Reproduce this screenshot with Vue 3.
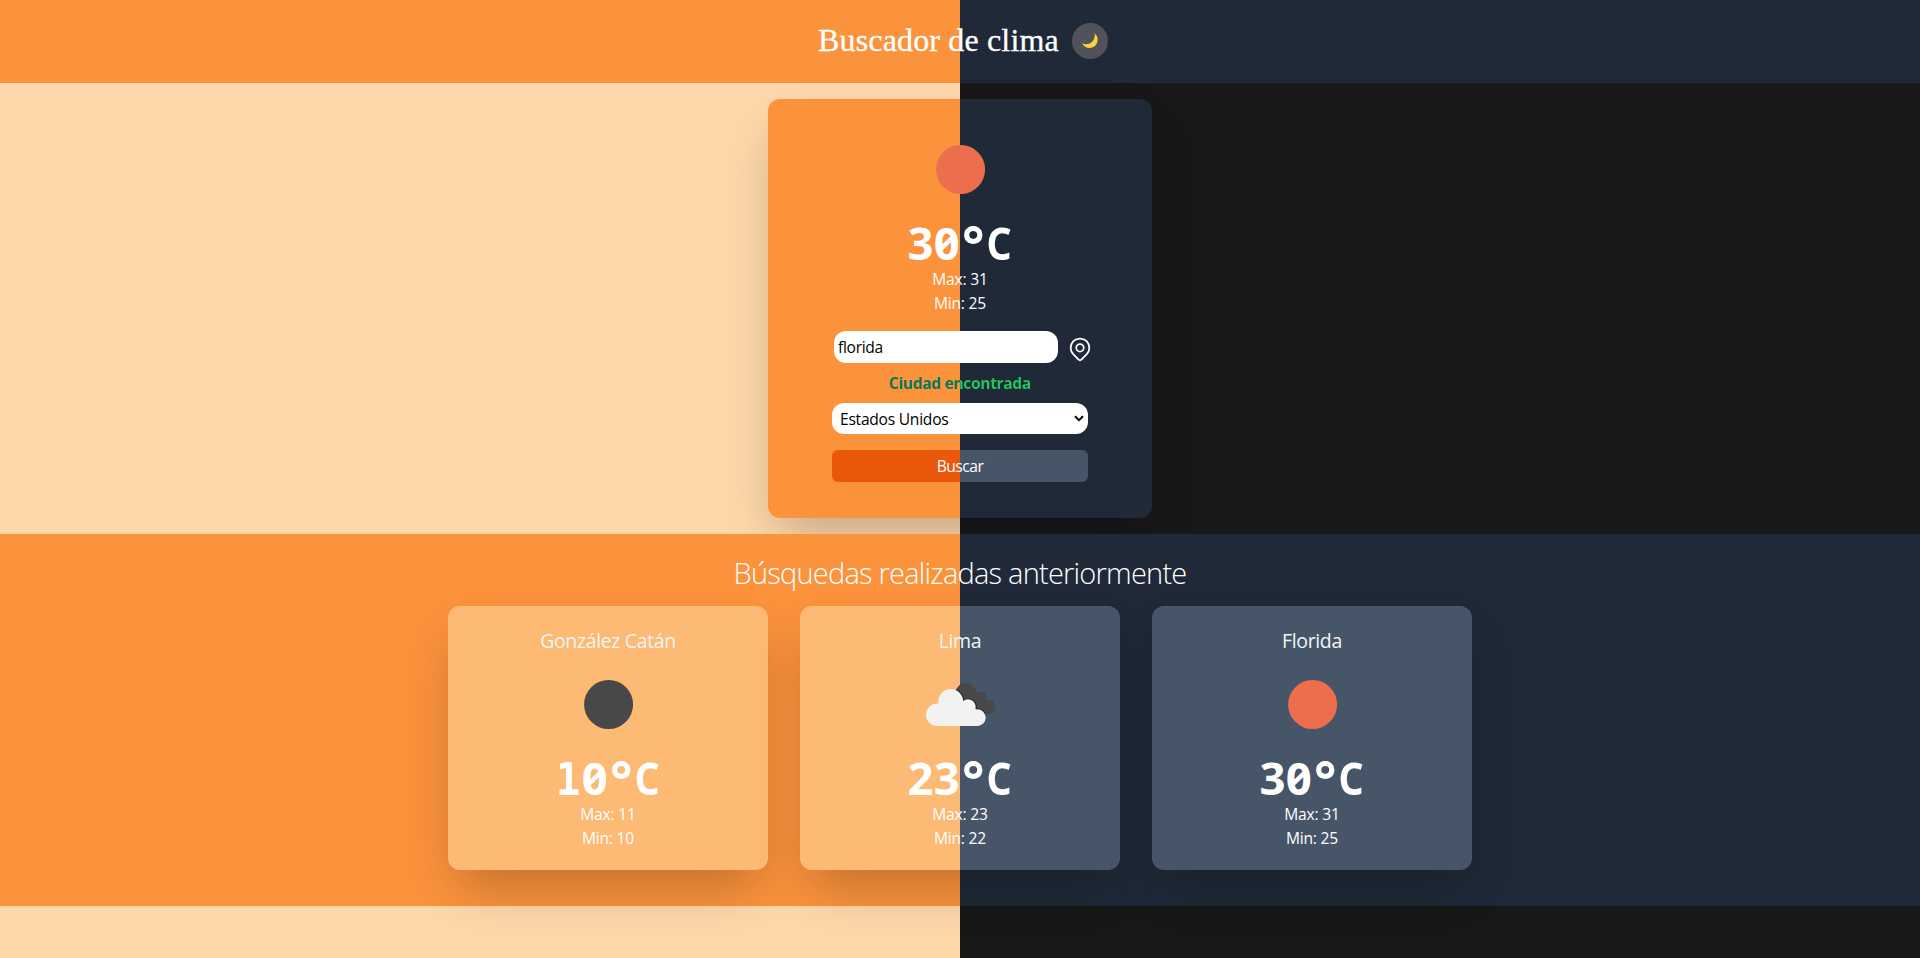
<script setup>
import { ref } from 'vue'

const city = ref('florida')
const country = ref('Estados Unidos')
const current = { icon: 'sun', temp: 30, max: 31, min: 25 }
const history = [
  { name: 'González Catán', icon: 'night', temp: 10, max: 11, min: 10, side: 'light' },
  { name: 'Lima', icon: 'clouds', temp: 23, max: 23, min: 22, side: 'split' },
  { name: 'Florida', icon: 'sun', temp: 30, max: 31, min: 25, side: 'dark' },
]
const glyphs = (t) => [...`${t}°C`]
const glyphClass = (g) => ({ one: g === '1', deg: g === '°', unit: g === 'C' })
</script>

<template>
  <div class="page">
    <header class="header">
      <h1>Buscador de clima</h1>
      <button class="theme" aria-label="Tema">
        <svg viewBox="0 0 18 18" width="18" height="18">
          <path d="M13.7 1.6C18.2 5.2 17.5 12 12.4 15.1C8 17.5 3.2 15.4 1.1 11.2C4.7 13 9 12.3 11.6 9.2C13.5 6.9 14.1 4.2 13.7 1.6Z" fill="#ffd23e" />
        </svg>
      </button>
    </header>

    <main class="search">
      <section class="panel">
        <svg class="icon" viewBox="0 0 100 100"><circle cx="50.6" cy="49.5" r="24.5" fill="#ec6e4c" /></svg>
        <p class="temp"><span v-for="(g, i) in glyphs(current.temp)" :key="i" :class="glyphClass(g)">{{ g }}</span></p>
        <p class="range">Max: {{ current.max }}</p>
        <p class="range">Min: {{ current.min }}</p>
        <div class="city">
          <input v-model="city" type="text" />
          <svg class="pin" viewBox="0 0 24 24" width="28" height="28" fill="none" stroke="#fff" stroke-width="1.5" stroke-linecap="round" stroke-linejoin="round">
            <circle cx="12" cy="11" r="3.2" />
            <path d="M17.657 16.657L13.414 20.9a2 2 0 0 1-2.827 0l-4.244-4.243a8 8 0 1 1 11.314 0z" />
          </svg>
        </div>
        <p class="status">Ciudad encontrada</p>
        <div class="country">
          <select v-model="country"><option>Estados Unidos</option></select>
          <svg viewBox="0 0 10 7" width="10" height="7"><path d="M1 1.3L5 5.2L9 1.3" fill="none" stroke="#000" stroke-width="2" /></svg>
        </div>
        <button class="submit">Buscar</button>
      </section>
    </main>

    <section class="history">
      <h2>Búsquedas realizadas anteriormente</h2>
      <div class="cards">
        <article v-for="c in history" :key="c.name" class="card" :class="c.side">
          <h3>{{ c.name }}</h3>
          <svg v-if="c.icon === 'clouds'" class="icon" viewBox="0 0 100 100">
            <defs>
              <clipPath id="back-cloud">
                <circle cx="56" cy="38.7" r="10.7" />
                <circle cx="70.7" cy="43" r="6.3" />
                <circle cx="78" cy="52" r="7.3" />
                <path d="M56 38L71 40L78 52V59H60Z" />
              </clipPath>
            </defs>
            <g clip-path="url(#back-cloud)">
              <rect x="40" y="20" width="50" height="45" fill="#484849" />
              <g fill="#252527">
                <circle cx="40.7" cy="46.5" r="13.6" />
                <circle cx="58" cy="52" r="8.8" />
                <circle cx="67.3" cy="62.6" r="9.4" />
              </g>
            </g>
            <g fill="#f2f2f0">
              <circle cx="40.7" cy="46.5" r="12.5" />
              <circle cx="27.2" cy="59.8" r="11.2" />
              <circle cx="58" cy="52" r="7.7" />
              <circle cx="67.3" cy="62.6" r="8.4" />
              <path d="M27.2 71V55L38 46H58L67.3 56V71Z" />
            </g>
          </svg>
          <svg v-else class="icon" viewBox="0 0 100 100">
            <circle cx="50.6" cy="49.5" r="24.5" :fill="c.icon === 'sun' ? '#ec6e4c' : '#48484a'" />
          </svg>
          <p class="temp"><span v-for="(g, i) in glyphs(c.temp)" :key="i" :class="glyphClass(g)">{{ g }}</span></p>
          <p class="range">Max: {{ c.max }}</p>
          <p class="range">Min: {{ c.min }}</p>
        </article>
      </div>
    </section>
  </div>
</template>

<style>
body { margin: 0; }
</style>

<style scoped>
* { box-sizing: border-box; }
h1, h2, h3, p { margin: 0; }
.page {
  min-height: 958px;
  background: linear-gradient(90deg, #fed7aa 50%, #1a1718 50%);
  font-family: "Open Sans", "Noto Sans", sans-serif;
  color: #fff;
}
.header {
  height: 83px;
  display: flex;
  justify-content: center;
  align-items: center;
  gap: 13px;
  padding: 0 0 1px 6px;
  background: linear-gradient(90deg, #fb923c 50%, #1f2937 50%);
}
h1 {
  width: 241px;
  padding-bottom: 2px;
  font: 400 32px/36px "Liberation Serif", serif;
  letter-spacing: 0.16px;
  white-space: nowrap;
  -webkit-text-stroke: 0.3px #fff;
}
.theme {
  width: 36px;
  height: 36px;
  padding: 0;
  border: 0;
  border-radius: 50%;
  background: #52525b;
  display: flex;
  align-items: center;
  justify-content: center;
}
.search {
  height: 451px;
  padding-top: 16px;
  display: flex;
  justify-content: center;
}
.panel {
  width: 384px;
  height: 419px;
  padding: 21px 64px 0;
  border-radius: 12px;
  background: linear-gradient(90deg, #fb923c 50%, #1f2937 50%);
  box-shadow: 0 25px 50px -12px rgba(0, 0, 0, 0.25);
  display: flex;
  flex-direction: column;
  align-items: center;
}
.icon { display: block; width: 100px; height: 100px; flex: none; }
.temp {
  height: 48px;
  display: flex;
  justify-content: center;
  font: 700 45.5px/44px "Noto Sans", sans-serif;
  font-feature-settings: "zero";
}
.temp span { width: 26.3px; display: flex; justify-content: center; }
.temp .one { font-family: "DejaVu Sans Mono", monospace; font-size: 44px; line-height: 49px; transform: scaleX(0.93); }
.temp .deg { font-size: 53px; line-height: 50px; }
.temp .unit { transform: scaleX(0.86); }
.range { font-size: 15.6px; line-height: 23.9px; letter-spacing: -0.2px; }
.city {
  width: 256px;
  margin-top: 15px;
  padding-left: 2px;
  display: flex;
  gap: 8px;
}
input {
  width: 224px;
  height: 32px;
  flex: none;
  border: 0;
  border-radius: 12px;
  padding: 0 4px;
  background: #fff;
  color: #000;
  font: 400 15.6px/32px "Open Sans", sans-serif;
  letter-spacing: -0.3px;
  outline: 0;
}
.pin { flex: none; margin-top: 4px; }
.status {
  width: 256px;
  margin-top: 8px;
  text-align: center;
  font-size: 15.6px;
  font-weight: 700;
  line-height: 24px;
  letter-spacing: -0.37px;
  color: transparent;
  background: linear-gradient(90deg, #047857 50%, #22c55e 50%);
  background-clip: text;
  -webkit-background-clip: text;
}
.country { position: relative; width: 256px; height: 31px; margin-top: 8px; }
select {
  width: 256px;
  height: 31px;
  display: block;
  appearance: none;
  border: 0;
  border-radius: 12px;
  padding: 2px 8px 0;
  background: #fff;
  color: #000;
  font: 400 15.6px/29px "Open Sans", sans-serif;
  letter-spacing: -0.25px;
}
.country svg { position: absolute; right: 4px; top: 12px; }
.submit {
  width: 256px;
  height: 32px;
  margin-top: 16px;
  border: 0;
  border-radius: 6px;
  background: linear-gradient(90deg, #ea580c 50%, #475569 50%);
  color: #fff;
  font: 400 15.6px/32px "Open Sans", sans-serif;
  letter-spacing: -0.5px;
  padding: 0;
}
.history {
  position: relative;
  height: 372px;
  padding-top: 20px;
  background: linear-gradient(90deg, #fb923c 50%, #1f2937 50%);
}
h2 {
  height: 52px;
  text-align: center;
  font-size: 29px;
  font-weight: 300;
  line-height: 38px;
  letter-spacing: -0.78px;
  white-space: nowrap;
}
.cards { display: flex; justify-content: center; gap: 32px; }
.card {
  width: 320px;
  height: 264px;
  padding-top: 21px;
  border-radius: 12px;
  box-shadow: 0 25px 50px -12px rgba(0, 0, 0, 0.25);
  display: flex;
  flex-direction: column;
  align-items: center;
}
.light { background: #fdba74; }
.dark { background: #475569; }
.split { background: linear-gradient(90deg, #fdba74 50%, #475569 50%); }
h3 { font-size: 19.5px; font-weight: 400; line-height: 28px; letter-spacing: -0.36px; color: #f3f4f6; }
</style>
